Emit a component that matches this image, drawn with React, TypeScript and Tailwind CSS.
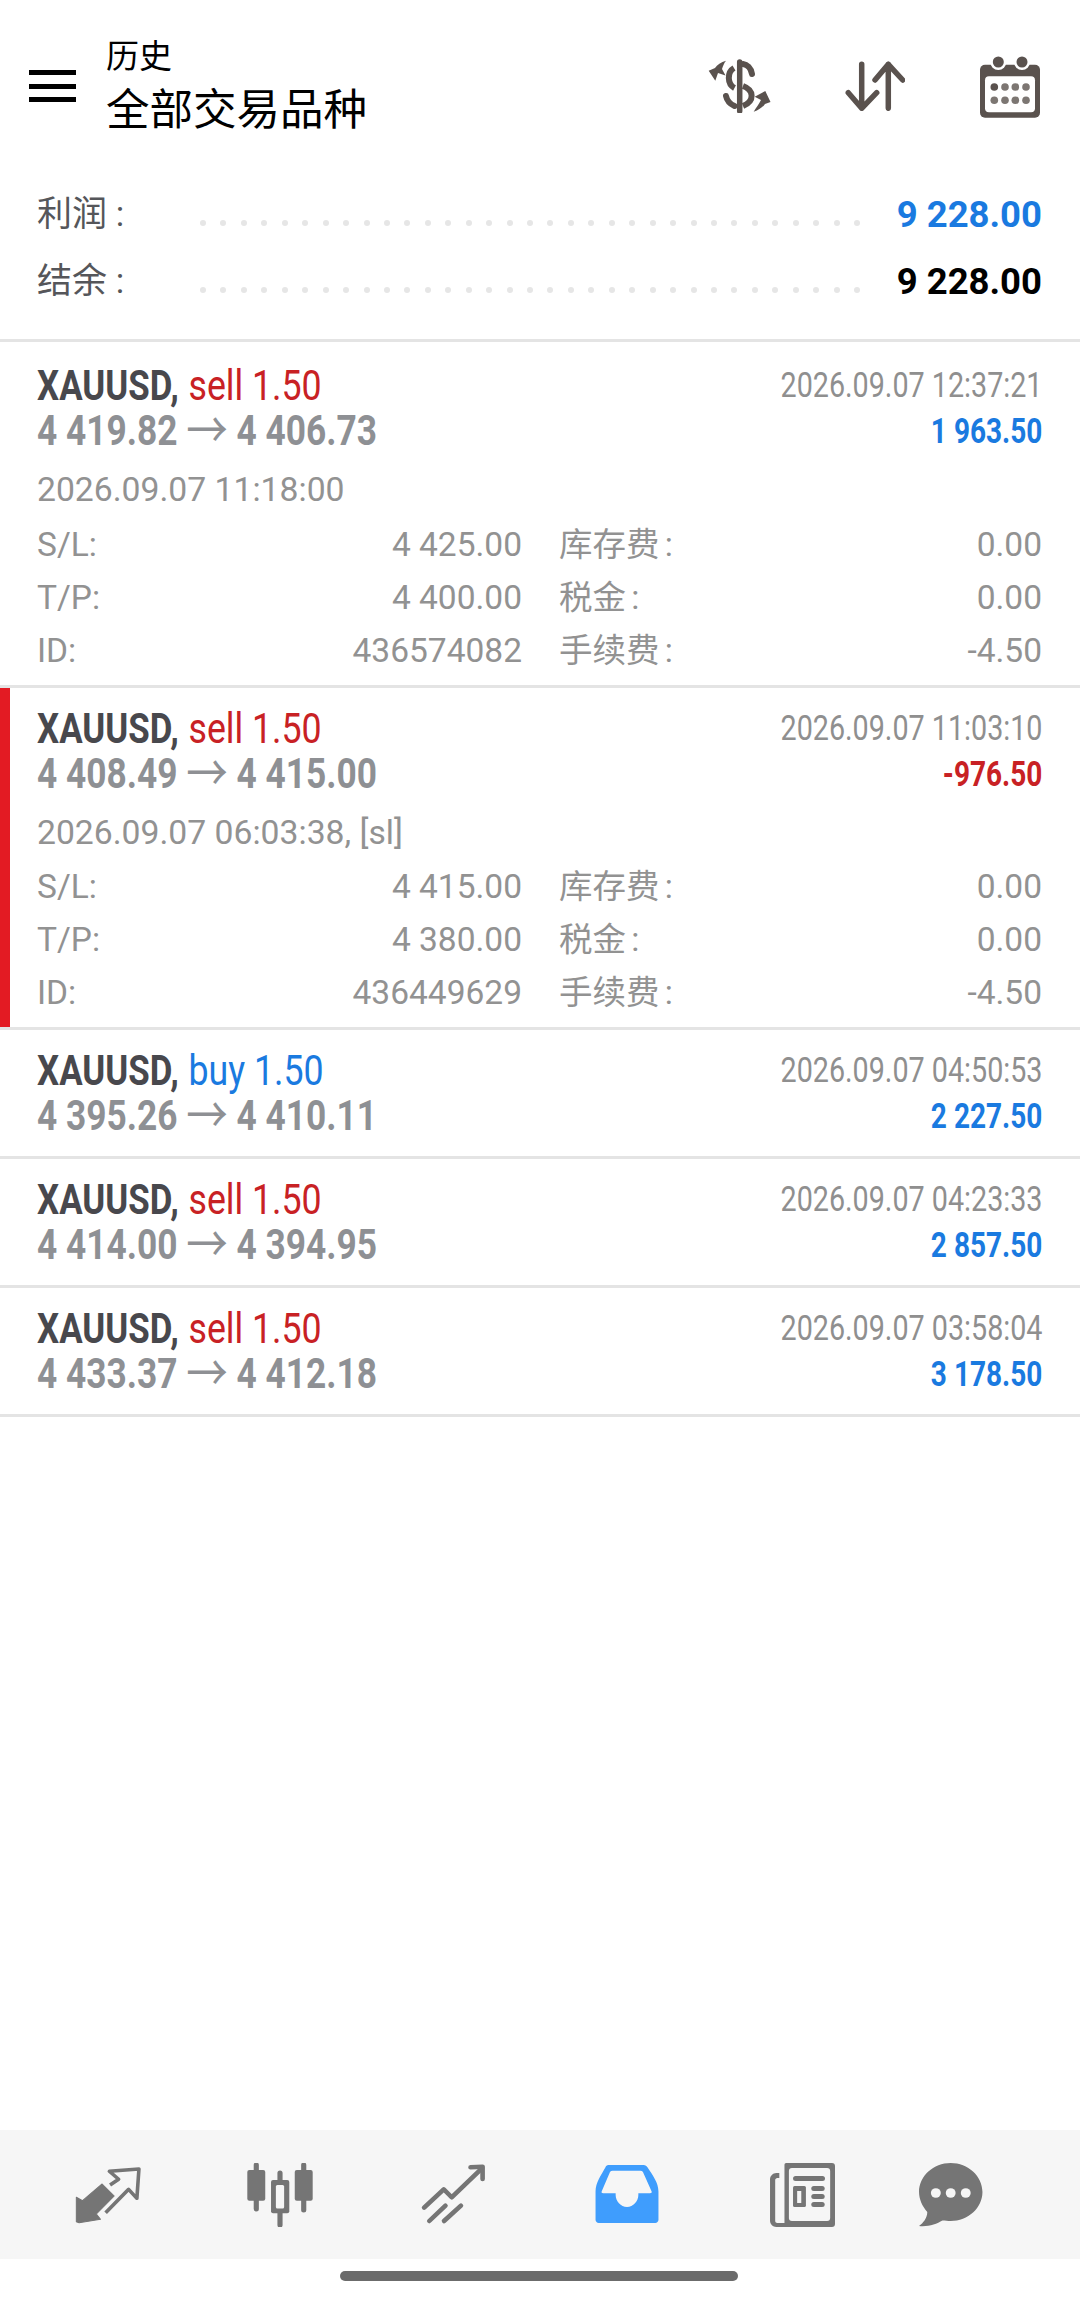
const cjk = "font-['Roboto','Noto_Sans_CJK_SC',sans-serif]";

const trades = [
  {
    side: "sell", lots: "1.50", open: "4 419.82", close: "4 406.73", time: "2026.09.07 12:37:21", profit: "1 963.50",
    opened: "2026.09.07 11:18:00", sl: "4 425.00", tp: "4 400.00", id: "436574082", first: true,
  },
  {
    side: "sell", lots: "1.50", open: "4 408.49", close: "4 415.00", time: "2026.09.07 11:03:10", profit: "-976.50",
    opened: "2026.09.07 06:03:38, [sl]", sl: "4 415.00", tp: "4 380.00", id: "436449629", marked: true,
  },
  { side: "buy", lots: "1.50", open: "4 395.26", close: "4 410.11", time: "2026.09.07 04:50:53", profit: "2 227.50" },
  { side: "sell", lots: "1.50", open: "4 414.00", close: "4 394.95", time: "2026.09.07 04:23:33", profit: "2 857.50" },
  { side: "sell", lots: "1.50", open: "4 433.37", close: "4 412.18", time: "2026.09.07 03:58:04", profit: "3 178.50" },
];

function DollarIcon() {
  return (
    <svg width="66" height="54" viewBox="0 0 66 54" fill="none" stroke="#5a524e">
      <path d="M32.700 3v49" strokeWidth="5.500" strokeLinecap="round" />
      <path d="M36 5C40 5.500 44 9 45 15" strokeWidth="6" strokeLinecap="round" />
      <path d="M27 9C20 13 20 25 27.500 29" strokeWidth="6" />
      <path d="M36 27C47 31 48 42 36 47" strokeWidth="6" />
      <path d="M19 37C20 42 23 45 27.500 47" strokeWidth="6" strokeLinecap="round" />
      <path d="M19 1.700C14 3 10 6 8 9L1.700 11.700 8.300 21.700 11 14 18.500 16.500 15 10C16 7 17 4 19 1.700Z" fill="#5a524e" stroke="none" />
      <path d="M46.700 52.700C52 51 56 48 58 45L63.500 43 58.300 32 47.700 37.700 54 41C52 45 49 49 46.700 52.700Z" fill="#5a524e" stroke="none" />
    </svg>
  );
}

function SortIcon() {
  return (
    <svg width="60" height="50" viewBox="0 0 60 50" fill="none" stroke="#5a524e" strokeWidth="5.500" strokeLinecap="round" strokeLinejoin="round">
      <path d="M16.700 3.300v44M3.300 31.700l13.400 15.600 15-15.600" />
      <path d="M43.300 3.300v44M30 19 43.300 3.300 57.700 19" />
    </svg>
  );
}

function CalendarIcon() {
  return (
    <svg width="64" height="66" viewBox="0 0 64 66">
      <rect x="2" y="11.700" width="60" height="53" rx="5" fill="#5a524e" />
      <rect x="7" y="23.300" width="50" height="36" rx="4" fill="#fff" />
      <circle cx="20.300" cy="9" r="8" fill="#fff" />
      <circle cx="44" cy="9" r="8" fill="#fff" />
      <circle cx="20.300" cy="9" r="5.500" fill="#5a524e" />
      <circle cx="44" cy="9" r="5.500" fill="#5a524e" />
      {[16.3, 27, 37.3, 48].map((x, i) => (
        <g key={x}>
          <circle cx={x} cy="34" r="3.800" fill={i === 0 ? "#5a524e" : "#7c7672"} />
          <circle cx={x} cy="47.300" r="3.800" fill="#7c7672" />
        </g>
      ))}
    </svg>
  );
}

function NavIcon({ children, className }: { children: React.ReactNode; className?: string }) {
  return (
    <svg width="66" height="64" viewBox="0 0 64 64" preserveAspectRatio="none" className={className}>
      {children}
    </svg>
  );
}

function Row({ label, value }: { label: string; value: string }) {
  return (
    <div className="flex h-[53px] items-center justify-between">
      <span className="[word-spacing:-3px]">{label}</span>
      <span>{value}</span>
    </div>
  );
}

function Trade({ t }: { t: (typeof trades)[number] }) {
  const expanded = !!t.opened;
  const height = t.first ? "h-[346px] pt-[21px]" : expanded ? "h-[342px] pt-[18px]" : "h-[129px] pt-[18px]";
  return (
    <div className={`relative border-b-[3px] border-[#e4e4e4] pr-[38px] pl-[37px] ${height}`}>
      {t.marked && <div className="absolute top-0 bottom-0 left-0 w-[10px] bg-[#e31b23]" />}
      <div className="flex justify-between">
        <div className="origin-left scale-x-[0.83] text-[42px] leading-[45px] font-bold whitespace-nowrap text-[#48484d]">
          XAUUSD,{" "}
          <span className={`ml-[1px] text-[43px] font-normal ${t.side === "sell" ? "text-[#c82124]" : "text-[#1a7ae0]"}`}>
            {t.side} {t.lots}
          </span>
        </div>
        <div className="origin-right scale-x-[0.82] text-[35px] leading-[45px] whitespace-nowrap text-[#8f8f8f]">{t.time}</div>
      </div>
      <div className="flex justify-between">
        <div className="origin-left scale-x-[0.83] text-[42.5px] leading-[45px] font-bold whitespace-nowrap text-[#8e9094]">
          {t.open} <span className="relative top-[3px] text-[50px] leading-[0] font-normal">→</span> {t.close}
        </div>
        <div
          className={`origin-right translate-y-[1px] scale-x-[0.8] text-[35px] leading-[45px] font-bold whitespace-nowrap ${t.profit.startsWith("-") ? "text-[#c82124]" : "text-[#1a7ae0]"}`}
        >
          {t.profit}
        </div>
      </div>
      {expanded && (
        <div className={`text-[33.5px] text-[#929292] ${cjk}`}>
          <div className="mt-[13px] h-[48px] text-[33.7px] leading-[48px]">{t.opened}</div>
          <div className={`flex gap-[37px] ${t.marked ? "mt-[4px]" : "mt-[5px]"}`}>
            <div className="w-[485px]">
              <Row label="S/L:" value={t.sl!} />
              <Row label="T/P:" value={t.tp!} />
              <Row label="ID:" value={t.id!} />
            </div>
            <div className="flex-1">
              <Row label="库存费 :" value="0.00" />
              <Row label="税金 :" value="0.00" />
              <Row label="手续费 :" value="-4.50" />
            </div>
          </div>
        </div>
      )}
    </div>
  );
}

export default function App() {
  return (
    <div className={`flex h-[2302px] w-[1080px] flex-col overflow-hidden bg-white ${cjk}`}>
      {/* top bar */}
      <div className="flex h-[162px] items-start pt-[32px]">
        <div className="mt-[38px] ml-[29px] flex h-[32px] w-[47px] flex-col justify-between">
          <div className="h-[5px] bg-black" />
          <div className="h-[5px] bg-black" />
          <div className="h-[5px] bg-black" />
        </div>
        <div className="mt-[3px] ml-[30px] text-black">
          <div className="h-[44px] text-[33px] leading-[44px]">历史</div>
          <div className="h-[62px] text-[43.500px] leading-[64px]">全部交易品种</div>
        </div>
        <div className="mt-[21px] ml-auto flex items-center">
          <DollarIcon />
          <div className="ml-[72px]">
            <SortIcon />
          </div>
          <div className="mr-[38px] ml-[73px]">
            <CalendarIcon />
          </div>
        </div>
      </div>

      {/* totals */}
      <div className="flex h-[180px] flex-col border-b-[3px] border-[#e4e4e4] pr-[38px] pl-[37px] text-[35px]">
        <div className="mt-[20px] flex h-[67px] items-center">
          <span className="w-[163px] text-[#55565a]">利润 :</span>
          <div className="flex w-[660px] justify-between pt-[14px]">
            {Array.from({ length: 33 }).map((_, i) => (
              <i key={i} className="size-[6px] rounded-full bg-[#e6e6e6]" />
            ))}
          </div>
          <span className="ml-auto text-[36.5px] font-bold text-[#1a7ae0]">9 228.00</span>
        </div>
        <div className="flex h-[67px] items-center">
          <span className="w-[163px] text-[#55565a]">结余 :</span>
          <div className="flex w-[660px] justify-between pt-[14px]">
            {Array.from({ length: 33 }).map((_, i) => (
              <i key={i} className="size-[6px] rounded-full bg-[#e6e6e6]" />
            ))}
          </div>
          <span className="ml-auto text-[36.5px] font-bold text-black">9 228.00</span>
        </div>
      </div>

      {trades.map((t) => (
        <Trade key={t.time} t={t} />
      ))}

      {/* bottom nav */}
      <div className="mt-auto flex h-[129px] items-center bg-[#f6f6f6] pl-[75px]">
        <NavIcon>
          <path d="M1.300 34.300 7.300 37.700 26.300 21 38 33 20.700 51 24.700 56.300 4 59.700 1.300 58.700Z" fill="#757575" stroke="#757575" strokeLinejoin="round" />
          <path d="M34 22l8.300-5.700-9-8L62 6l-2 29.300-8-9-22.300 23.400" fill="none" stroke="#757575" strokeWidth="3.500" strokeLinejoin="round" />
        </NavIcon>
        <NavIcon className="ml-[106px]">
          <g fill="#757575">
            <rect x="0.300" y="7" width="17.400" height="30.700" rx="2" />
            <rect x="46.300" y="7" width="17.400" height="30.700" rx="2" />
            <rect x="23.300" y="17" width="17.700" height="33.300" rx="2" />
          </g>
          <path d="M9 2v44M32 10v52M55 2v45" stroke="#757575" strokeWidth="5" strokeLinecap="round" />
          <rect x="28" y="22" width="8" height="23.500" rx="1.500" fill="#f6f6f6" />
        </NavIcon>
        <NavIcon className="ml-[107px]">
          <g fill="none" stroke="#757575" strokeWidth="4.500" strokeLinecap="round" strokeLinejoin="round">
            <path d="M4 44.700 23 26.300l7.700 8L60 5.300" />
            <path d="M49 4.300 60.700 3.700 60.700 16" />
            <path d="M9 58 24.700 42.700M23.300 58 39.700 42.700" />
          </g>
        </NavIcon>
        <NavIcon className="ml-[108px]">
          <path d="M14 2h34c2 0 3 1 4 2.500 5 8 10.500 15 10.500 24v28.500c0 1.500-1.500 3-3 3H4.500c-1.500 0-3-1.500-3-3V28.500C1.500 19.500 7 12 11 4.500 11.500 3 12.500 2 14 2Z" fill="#3f9dfd" />
          <path d="M18 7.700h27c2 0 2.500 1 3 2.500l7.800 18c.5 1 0 2-1.500 2H43v1.800c0 6-5 12-11 12s-11-6-11-12v-1.800H9c-1.500 0-2-1-1.500-2l7.500-18c.5-1.500 1-2.500 3-2.500Z" fill="#f6f6f6" />
        </NavIcon>
        <NavIcon className="ml-[109px]">
          <g fill="#757575">
            <path d="M17 0h44c2 0 3 1 3 3v58c0 2-1 3-3 3H7c-3 0-6-3-6-6V16c0-3 3-6 6-6h3v5H8c-1 0-2 1-2 2v41c0 1 1 2 2 2h7V3c0-2 0-3 2-3Z" />
          </g>
          <rect x="19.300" y="5" width="40" height="53" rx="3" fill="#f6f6f6" />
          <g fill="#757575">
            <rect x="23.300" y="13" width="31" height="5" rx="2.500" />
            <rect x="23.300" y="23" width="12.500" height="21" rx="1.500" />
            <rect x="41" y="23" width="13" height="5" rx="2.500" />
            <rect x="41" y="31" width="13" height="5" rx="2.500" />
            <rect x="41" y="39" width="13" height="5" rx="2.500" />
          </g>
          <rect x="27.300" y="28" width="4" height="12" fill="#f6f6f6" />
        </NavIcon>
        <NavIcon className="ml-[83px]">
          <path d="M31.700 0C48.500 0 62.500 13 62.500 29S48.500 58 31.700 58c-3 0-5-.3-8-.5C18 61 10 64 1 63c4-3 8-8 8-14C4 43 1 36 1 29 1 13 15 0 31.700 0Z" fill="#757575" />
          <circle cx="17.300" cy="30" r="4.800" fill="#f6f6f6" />
          <circle cx="31.700" cy="30" r="4.800" fill="#f6f6f6" />
          <circle cx="46.300" cy="30" r="4.800" fill="#f6f6f6" />
        </NavIcon>
      </div>
      <div className="flex h-[43px] justify-center pt-[12px] pr-[2px]">
        <div className="h-[10px] w-[398px] rounded-full bg-[#6b6b6b]" />
      </div>
    </div>
  );
}
